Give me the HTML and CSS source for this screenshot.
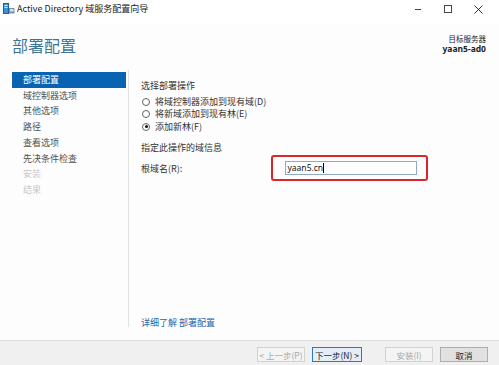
FILE: index.html
```html
<!DOCTYPE html>
<html>
<head>
    <title>Active Directory 域服务配置向导</title>
    <link rel="stylesheet" href="styles.css">
</head>
<body>
    <div class="window">
        <div class="titlebar">
            <svg class="app-icon" width="12" height="11" viewBox="0 0 12 11">
                <rect x="0.5" y="0.5" width="5" height="10" fill="#3d8fd6" stroke="#1f5f9e"/>
                <rect x="1.5" y="2" width="3" height="1" fill="#dceefc"/>
                <rect x="1.5" y="4" width="3" height="1" fill="#dceefc"/>
                <rect x="6" y="5" width="5.5" height="5.5" fill="#7a8fa3"/>
                <rect x="7" y="6" width="3.5" height="2.5" fill="#cfe3f3"/>
            </svg>
            <span class="title-text">Active Directory 域服务配置向导</span>
            <div class="win-controls">
                <span class="ctl ctl-min"></span>
                <span class="ctl ctl-max"></span>
                <span class="ctl ctl-close">
                    <svg width="9" height="9" viewBox="0 0 9 9"><path d="M0.5 0.5 L8.5 8.5 M8.5 0.5 L0.5 8.5" stroke="#333" stroke-width="1"/></svg>
                </span>
            </div>
        </div>

        <div class="header">
            <h1 class="page-title">部署配置</h1>
            <div class="target">
                <div class="target-label">目标服务器</div>
                <div class="target-name">yaan5-ad0</div>
            </div>
        </div>

        <div class="main">
            <ul class="nav">
                <li class="selected">部署配置</li>
                <li>域控制器选项</li>
                <li>其他选项</li>
                <li>路径</li>
                <li>查看选项</li>
                <li>先决条件检查</li>
                <li class="disabled">安装</li>
                <li class="disabled">结果</li>
            </ul>

            <div class="content">
                <div class="section-label">选择部署操作</div>
                <div class="radio-group">
                    <label class="radio"><span class="radio-dot"></span>将域控制器添加到现有域(D)</label>
                    <label class="radio"><span class="radio-dot"></span>将新域添加到现有林(E)</label>
                    <label class="radio"><span class="radio-dot checked"></span>添加新林(F)</label>
                </div>

                <div class="section-label spaced">指定此操作的域信息</div>
                <div class="field-row">
                    <span class="field-label">根域名(R):</span>
                    <span class="highlight-box">
                        <span class="text-input">yaan5.cn<span class="caret"></span></span>
                    </span>
                </div>

                <a class="more-link" href="#">详细了解 部署配置</a>
            </div>
        </div>

        <div class="footer">
            <button class="btn" disabled>&lt; 上一步(P)</button>
            <button class="btn btn-default">下一步(N) &gt;</button>
            <button class="btn btn-install" disabled>安装(I)</button>
            <button class="btn">取消</button>
        </div>
    </div>
</body>
</html>
```

FILE: styles.css
```css
body {
    margin: 0;
    padding: 0;
    font-family: "Noto Sans CJK SC", "Noto Sans", sans-serif;
    font-size: 9px;
    color: #333;
    background-color: #fff;
}
.window {
    width: 499px;
    height: 365px;
    display: flex;
    flex-direction: column;
    background-color: #fdfdfd;
    overflow: hidden;
}

/* title bar */
.titlebar {
    height: 24px;
    display: flex;
    align-items: flex-start;
    background-color: #fff;
}
.app-icon {
    margin: 3px 2px 0 3px;
}
.title-text {
    font-size: 9px;
    line-height: 18px;
    color: #222;
}
.win-controls {
    margin-left: auto;
    display: flex;
    margin-right: 6px;
}
.ctl {
    width: 30px;
    height: 18px;
    display: flex;
    align-items: center;
    justify-content: center;
}
.ctl-min::before {
    content: "";
    width: 6px;
    border-top: 1px solid #444;
}
.ctl-max::before {
    content: "";
    width: 6px;
    height: 6px;
    border: 1px solid #444;
}

/* header */
.header {
    height: 46px;
    box-sizing: border-box;
    padding: 11px 13px 0 12px;
    display: flex;
    justify-content: space-between;
    align-items: flex-start;
}
.page-title {
    margin: 0;
    font-size: 16px;
    font-weight: normal;
    line-height: 20px;
    color: #3b7596;
}
.target {
    margin-top: -2px;
    text-align: right;
    color: #222;
}
.target-label {
    font-size: 7.5px;
    line-height: 11px;
}
.target-name {
    font-family: "Noto Sans", sans-serif;
    font-weight: bold;
    font-size: 8.5px;
    line-height: 9px;
}

/* main */
.main {
    flex: 1;
    display: flex;
}
.nav {
    list-style-type: none;
    width: 114px;
    margin: 0 0 13px 0;
    padding: 2px 2px 0 12px;
    border-right: 1px solid #e2e2e2;
}
.nav li {
    line-height: 15.7px;
    padding-left: 11px;
    color: #505050;
}
.nav li.selected {
    background-color: #0a63b2;
    color: #fff;
}
.nav li.disabled {
    color: #c8c8c8;
}

.content {
    flex: 1;
    display: flex;
    flex-direction: column;
    padding: 9.5px 0 11px 12px;
}
.section-label {
    line-height: 12px;
    margin-bottom: 4px;
}
.section-label.spaced {
    margin-top: 8.5px;
    margin-bottom: 1.5px;
}
.radio {
    display: flex;
    align-items: center;
    line-height: 12.5px;
}
.radio-dot {
    width: 6px;
    height: 6px;
    border: 1px solid #666;
    border-radius: 50%;
    margin: 0 5px 0 1px;
    display: flex;
    align-items: center;
    justify-content: center;
    background-color: #fff;
}
.radio-dot.checked::after {
    content: "";
    width: 3px;
    height: 3px;
    border-radius: 50%;
    background-color: #111;
}

.field-row {
    display: flex;
    align-items: center;
}
.field-label {
    width: 130px;
}
.highlight-box {
    display: inline-flex;
    border: 2px solid #d8262c;
    border-radius: 3px;
    padding: 3.5px 9px 4.5px 11.5px;
}
.text-input {
    width: 128px;
    height: 12px;
    border: 1px solid #8fa9c4;
    background-color: #fff;
    font-family: "Noto Sans", sans-serif;
    font-size: 8.5px;
    line-height: 12px;
    padding-left: 2px;
    color: #111;
    display: flex;
    align-items: center;
}
.caret {
    display: inline-block;
    height: 10px;
    border-left: 1px solid #000;
}
.more-link {
    margin-top: auto;
    line-height: 12px;
    color: #2067ae;
    text-decoration: none;
}

/* footer */
.footer {
    height: 25px;
    box-sizing: border-box;
    border-top: 1px solid #dedede;
    background-color: #f0f0f0;
    padding: 6px 11px 0 0;
    display: flex;
    justify-content: flex-end;
    align-items: flex-start;
}
.btn {
    height: 15px;
    width: 48px;
    padding: 0;
    margin-left: 7px;
    font-family: "Noto Sans CJK SC", "Noto Sans", sans-serif;
    font-size: 8.5px;
    color: #222;
    background-color: #e1e1e1;
    border: 1px solid #adadad;
}
.btn:disabled {
    color: #a8a8a8;
    background-color: #f4f4f4;
    border-color: #d2d2d2;
}
.btn-default {
    width: 50px;
    border-color: #2d78c0;
    background-color: #e5eef7;
}
.btn-install {
    margin-left: 23px;
}
```
